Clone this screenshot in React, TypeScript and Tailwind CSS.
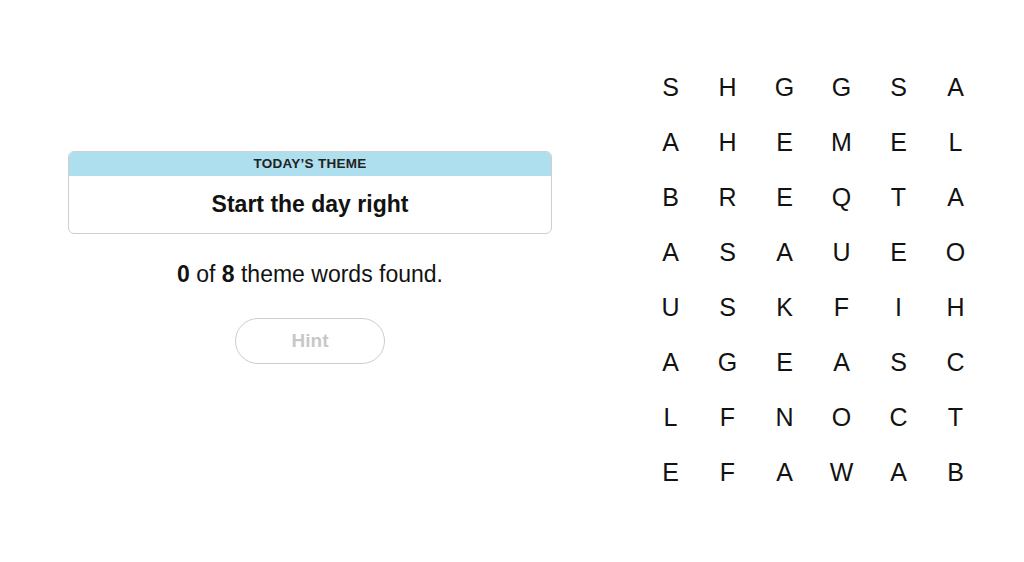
const rows = [
  'SHGGSA',
  'AHEMEL',
  'BREQTA',
  'ASAUEO',
  'USKFIH',
  'AGEASC',
  'LFNOCT',
  'EFAWAB',
];

export default function App() {
  return (
    <div className="w-full h-[562px] bg-white flex text-[#121212]" style={{ fontFamily: '"Liberation Sans", Arial, sans-serif' }}>
      {/* Left: theme + progress */}
      <div className="w-[484px] ml-[68px] mt-[151px] flex flex-col items-center">
        <div className="w-full rounded-[6px] border border-[#cfcfcf] overflow-hidden">
          <div className="h-[24px] bg-[#aedfee] flex items-center justify-center text-[13.5px] font-semibold tracking-[0.02em] text-[#222]">
            TODAY’S THEME
          </div>
          <div className="h-[57px] flex items-center justify-center text-[23px] font-bold">
            Start the day right
          </div>
        </div>
        <p className="mt-[26px] text-[23px] leading-[28px]">
          <span className="font-bold">0</span> of <span className="font-bold">8</span> theme words found.
        </p>
        <button className="mt-[30px] w-[150px] h-[46px] rounded-full border-[1.5px] border-[#cccccc] text-[19px] font-bold text-[#c8c8c8] bg-white">
          Hint
        </button>
      </div>

      {/* Right: letter grid */}
      <div className="ml-[90px] mt-[60px] grid grid-cols-6 w-[342px] h-[440px] self-start">
        {rows.map((r, i) =>
          r.split('').map((ch, j) => (
            <div key={`${i}-${j}`} className="flex items-center justify-center text-[25px] text-[#121212]">
              {ch}
            </div>
          ))
        )}
      </div>
    </div>
  );
}
